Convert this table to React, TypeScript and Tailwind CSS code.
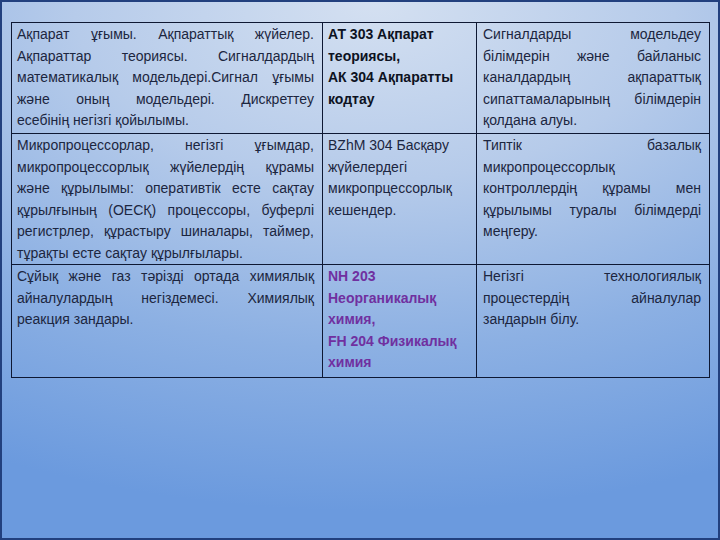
const rows = [
  {
    height: "h-[111px]",
    left: [
      "Ақпарат ұғымы. Ақпараттық жүйелер.",
      "Ақпараттар теориясы. Сигналдардың",
      "математикалық модельдері.Сигнал ұғымы",
      "және оның модельдері. Дискреттеу",
      "есебінің негізгі қойылымы.",
    ],
    middle: ["АТ 303 Ақпарат", "теориясы,", "АК 304 Ақпаратты", "кодтау"],
    middleClass: "font-bold text-[#0d1222]",
    right: [
      "Сигналдарды модельдеу",
      "білімдерін және байланыс",
      "каналдардың ақпараттық",
      "сипаттамаларының білімдерін",
      "қолдана алуы.",
    ],
  },
  {
    height: "h-[129px]",
    left: [
      "Микропроцессорлар, негізгі ұғымдар,",
      "микропроцессорлық жүйелердің құрамы",
      "және құрылымы: оперативтік есте сақтау",
      "құрылғының (ОЕСҚ) процессоры, буферлі",
      "регистрлер, құрастыру шиналары, таймер,",
      "тұрақты есте сақтау құрылғылары.",
    ],
    middle: ["BZhM 304 Басқару", "жүйелердегі", "микропрцессорлық", "кешендер."],
    middleClass: "text-[#1c2640]",
    right: [
      "Типтік базалық",
      "микропроцессорлық",
      "контроллердің құрамы мен",
      "құрылымы туралы білімдерді",
      "меңгеру.",
    ],
  },
  {
    height: "h-[113px]",
    left: [
      "Сұйық және газ тәрізді ортада химиялық",
      "айналулардың негіздемесі. Химиялық",
      "реакция зандары.",
    ],
    middle: ["NH 203", "Неорганикалық", "химия,", "FH 204 Физикалық", "химия"],
    middleClass: "font-bold text-[#7030a0]",
    right: [
      "Негізгі технологиялық",
      "процестердің айналулар",
      "зандарын білу.",
    ],
  },
];

function Justified({ lines }: { lines: string[] }) {
  return (
    <>
      {lines.map((line, i) => {
        const spread = i < lines.length - 1 && line.includes(" ");
        return (
          <div
            key={i}
            className={
              spread
                ? "whitespace-nowrap text-justify [text-align-last:justify]"
                : "whitespace-nowrap text-left"
            }
          >
            {line}
          </div>
        );
      })}
    </>
  );
}

export default function App() {
  return (
    <div
      className="w-[720px] h-[540px] overflow-hidden border-2 border-[#22407e] bg-[radial-gradient(120%_95%_at_52%_0%,#d4e0f1_0%,#b6cbea_35%,#8cb0e3_68%,#6b9ade_100%)] text-[14px] leading-[21.5px] text-[#1c2640]"
      style={{ fontFamily: '"Liberation Sans", "DejaVu Sans", Arial, sans-serif' }}
    >
      <table className="ml-[9px] mt-[20px] w-[698px] table-fixed border-collapse">
        <colgroup>
          <col className="w-[311px]" />
          <col className="w-[154px]" />
          <col className="w-[233px]" />
        </colgroup>
        <tbody>
          {rows.map((row, r) => (
            <tr key={r} className={row.height}>
              <td className="border border-[#0e1833] align-top pl-[5px] pr-[8px] pt-[1px]">
                <Justified lines={row.left} />
              </td>
              <td className={`border border-[#0e1833] align-top pl-[5px] pr-[4px] pt-[1px] ${row.middleClass}`}>
                {row.middle.map((line, i) => (
                  <div key={i} className="whitespace-nowrap">
                    {line}
                  </div>
                ))}
              </td>
              <td className="border border-[#0e1833] align-top pl-[6px] pr-[8px] pt-[1px]">
                <Justified lines={row.right} />
              </td>
            </tr>
          ))}
        </tbody>
      </table>
    </div>
  );
}
